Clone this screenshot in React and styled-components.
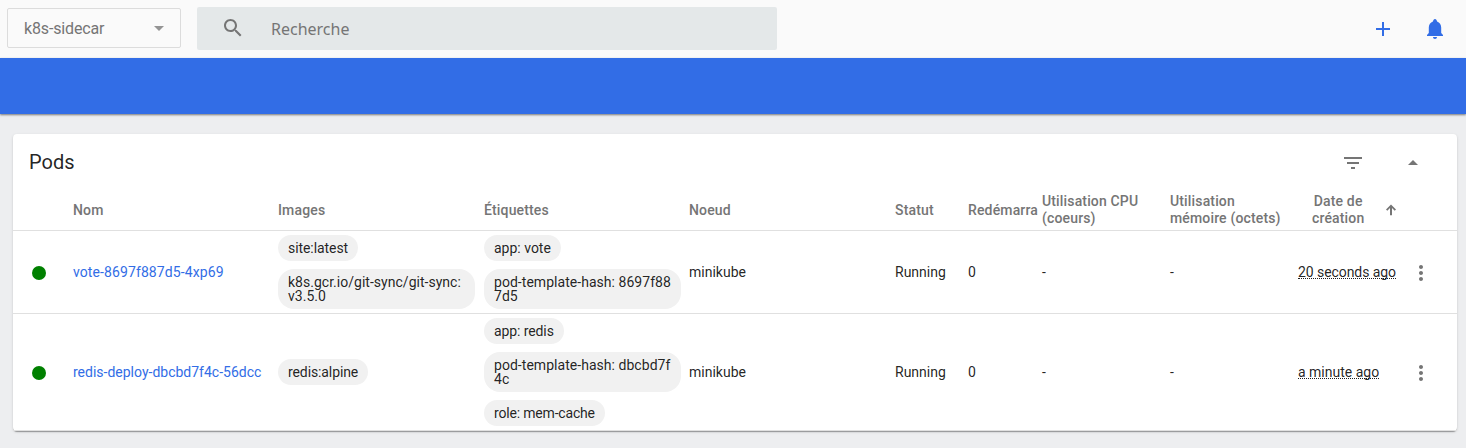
import React from 'react';
import styled, { createGlobalStyle } from 'styled-components';

const GlobalStyle = createGlobalStyle`
  * { box-sizing: border-box; }
  body {
    margin: 0;
    background: #edeef0;
    font-family: Roboto, "Liberation Sans", sans-serif;
    color: rgba(0, 0, 0, 0.87);
    overflow: hidden;
  }
`;

const Page = styled.div`
  display: flex;
  flex-direction: column;
  height: 448px;
`;

const Toolbar = styled.header`
  display: flex;
  align-items: flex-start;
  height: 58px;
  flex: none;
  padding: 7px 19px 0 7px;
  background: #fafafa;
`;

const NamespaceSelect = styled.button`
  display: flex;
  align-items: center;
  justify-content: space-between;
  width: 174px;
  height: 40px;
  margin-top: 1px;
  padding: 1px 16px 0;
  border: 1px solid #dcdcdc;
  border-radius: 2px;
  background: transparent;
  color: #757575;
  font: 400 16px/24px Roboto, sans-serif;
  letter-spacing: -0.15px;
`;

const Caret = styled.span`
  width: 0;
  height: 0;
  border: 5px solid transparent;
  border-top-color: #949494;
  border-bottom: 0;
`;

const SearchBox = styled.label`
  display: flex;
  align-items: center;
  width: 580px;
  height: 43px;
  margin-left: 16px;
  padding-left: 24px;
  border-radius: 2px;
  background: #e4e8e9;
  color: #757575;
`;

const SearchText = styled.span`
  margin-left: 26px;
  font: 400 16px/22px "Noto Sans", sans-serif;
`;

const ToolbarActions = styled.div`
  display: flex;
  gap: 28px;
  margin: 10px 0 0 auto;
`;

const Icon = styled.svg`
  display: block;
  flex: none;
  width: ${(p) => p.$size || 24}px;
  height: ${(p) => p.$size || 24}px;
  fill: ${(p) => p.$color || '#757575'};
`;

const ActionBar = styled.div`
  height: 56px;
  flex: none;
  background: #326de6;
  box-shadow: 0 1px 2px rgba(0, 0, 0, 0.5);
`;

const Card = styled.section`
  margin: 20px 9px 0 13px;
  border-radius: 4px;
  background: #fff;
  box-shadow: 0 2px 1px -1px rgba(0, 0, 0, 0.2), 0 1px 1px rgba(0, 0, 0, 0.14),
    0 1px 3px rgba(0, 0, 0, 0.12);
`;

const CardHeader = styled.div`
  display: flex;
  align-items: center;
  height: 56px;
  padding: 0 32px 0 16px;
`;

const CardTitle = styled.h1`
  flex: 1;
  margin: 0;
  font-size: 20px;
  line-height: 28px;
  font-weight: 400;
`;

const CardActions = styled.div`
  display: flex;
  gap: 36px;
  padding-top: 2px;
`;

const Row = styled.div`
  display: grid;
  grid-template-columns: 44px 205px 206px 205px 206px 73px 74px 128px 128px 112px 1fr;
  align-items: center;
  padding-left: 16px;
  border-bottom: 1px solid #e0e0e0;
  font-size: 14px;
  line-height: 20px;
`;

const HeaderRow = styled(Row)`
  height: 41px;
  color: #757575;
  font-weight: 500;
  line-height: 17px;
  letter-spacing: 0.15px;
`;

const HeaderCell = styled.span`
  padding-top: ${(p) => (p.$lines ? 0 : '1px')};
  white-space: pre;
`;

const SortHeader = styled.span`
  display: flex;
  align-items: center;
  gap: 19px;
  padding-left: 14px;
  text-align: center;
  white-space: pre;
`;

const PodLink = styled.a`
  color: #326de6;
  text-decoration: none;
  letter-spacing: ${(p) => p.$tracking || 0}px;
`;

const Chips = styled.div`
  display: flex;
  flex-direction: column;
  align-items: flex-start;
  gap: 8px;
  padding: 4px 8px 4px 0;
`;

const Chip = styled.span`
  max-width: 197px;
  padding: 6px 10px;
  border-radius: 16px;
  background: #f1f1f1;
  line-height: 14px;
  letter-spacing: ${(p) => p.$tracking || 0}px;
  word-break: break-all;
`;

const Age = styled.span`
  justify-self: start;
  margin-top: -1px;
  height: 14px;
  line-height: 14px;
  letter-spacing: ${(p) => p.$tracking || 0}px;
  border-bottom: 1px dotted rgba(0, 0, 0, 0.87);
  white-space: nowrap;
`;

const StatusDot = styled.span`
  width: 14px;
  height: 14px;
  margin: 1px 0 0 3px;
  border-radius: 50%;
  background: #008000;
`;

const paths = {
  search:
    'M15.5 14h-.79l-.28-.27C15.41 12.59 16 11.11 16 9.5 16 5.91 13.09 3 9.5 3S3 5.91 3 9.5 5.91 16 9.5 16c1.61 0 3.09-.59 4.23-1.57l.27.28v.79l5 4.99L20.49 19l-4.99-5zm-6 0C7.01 14 5 11.99 5 9.5S7.01 5 9.5 5 14 7.01 14 9.5 11.99 14 9.5 14z',
  add: 'M19 13h-6v6h-2v-6H5v-2h6V5h2v6h6v2z',
  bell: 'M12 22c1.1 0 2-.7 2-1.9h-4c0 1.2.89 1.9 2 1.9zm6.2-6v-5.5c0-3-1.6-5.2-4.1-6.1C13.7 3 13.2 2 12 2s-1.7 1-2.1 2.4c-2.5.9-4.1 3.1-4.1 6.1V16L4 18v1h16v-1l-1.8-2z',
  filter: 'M10 18h4v-2h-4v2zM3 6v2h18V6H3zm3 7h12v-2H6v2z',
  collapse: 'M7 14l5-5 5 5z',
  up: 'M4.5 11.2l1.9 1.9L10.5 9v11h3V9l4.1 4.1 1.9-1.9L12 3.7z',
  more: 'M12 8c1.1 0 2-.9 2-2s-.9-2-2-2-2 .9-2 2 .9 2 2 2zm0 2c-1.1 0-2 .9-2 2s.9 2 2 2 2-.9 2-2-.9-2-2-2zm0 6c-1.1 0-2 .9-2 2s.9 2 2 2 2-.9 2-2-.9-2-2-2z',
};

function Glyph({ name, size, color, className }) {
  return (
    <Icon viewBox="0 0 24 24" $size={size} $color={color} className={className}>
      <path d={paths[name]} />
    </Icon>
  );
}

const SearchGlyph = styled(Glyph)`
  margin-top: -2px;
`;

const MenuGlyph = styled(Glyph)`
  margin: 1px 0 0 -1px;
`;

const pods = [
  {
    name: 'vote-8697f887d5-4xp69',
    nameTracking: 0.1,
    images: [
      { text: 'site:latest', tracking: -0.07 },
      { text: 'k8s.gcr.io/git-sync/git-sync:v3.5.0', tracking: 0.02 },
    ],
    labels: [
      { text: 'app: vote' },
      { text: 'pod-template-hash: 8697f887d5', tracking: 0.04 },
    ],
    age: '20 seconds ago',
    ageTracking: -0.07,
  },
  {
    name: 'redis-deploy-dbcbd7f4c-56dcc',
    images: [{ text: 'redis:alpine', tracking: -0.1 }],
    labels: [
      { text: 'app: redis', tracking: -0.1 },
      { text: 'pod-template-hash: dbcbd7f4c', tracking: 0.04 },
      { text: 'role: mem-cache', tracking: -0.18 },
    ],
    age: 'a minute ago',
  },
];

function ChipList({ items }) {
  return (
    <Chips>
      {items.map((item) => (
        <Chip key={item.text} $tracking={item.tracking}>
          {item.text}
        </Chip>
      ))}
    </Chips>
  );
}

function PodRow({ pod }) {
  return (
    <Row>
      <StatusDot />
      <PodLink $tracking={pod.nameTracking}>{pod.name}</PodLink>
      <ChipList items={pod.images} />
      <ChipList items={pod.labels} />
      <span>minikube</span>
      <span>Running</span>
      <span>0</span>
      <span>-</span>
      <span>-</span>
      <Age $tracking={pod.ageTracking}>{pod.age}</Age>
      <MenuGlyph name="more" />
    </Row>
  );
}

export default function App() {
  return (
    <Page>
      <GlobalStyle />
      <Toolbar>
        <NamespaceSelect>
          k8s-sidecar
          <Caret />
        </NamespaceSelect>
        <SearchBox>
          <SearchGlyph name="search" />
          <SearchText>Recherche</SearchText>
        </SearchBox>
        <ToolbarActions>
          <Glyph name="add" color="#326de6" />
          <Glyph name="bell" color="#326de6" />
        </ToolbarActions>
      </Toolbar>
      <ActionBar />
      <Card>
        <CardHeader>
          <CardTitle>Pods</CardTitle>
          <CardActions>
            <Glyph name="filter" />
            <Glyph name="collapse" />
          </CardActions>
        </CardHeader>
        <HeaderRow>
          <span />
          <HeaderCell>Nom</HeaderCell>
          <HeaderCell>Images</HeaderCell>
          <HeaderCell>Étiquettes</HeaderCell>
          <HeaderCell>Noeud</HeaderCell>
          <HeaderCell>Statut</HeaderCell>
          <HeaderCell>Redémarra</HeaderCell>
          <HeaderCell $lines>{'Utilisation CPU\n(coeurs)'}</HeaderCell>
          <HeaderCell $lines>{'Utilisation\nmémoire (octets)'}</HeaderCell>
          <SortHeader>
            {'Date de\ncréation'}
            <Glyph name="up" size={16} />
          </SortHeader>
        </HeaderRow>
        {pods.map((pod) => (
          <PodRow key={pod.name} pod={pod} />
        ))}
      </Card>
    </Page>
  );
}
